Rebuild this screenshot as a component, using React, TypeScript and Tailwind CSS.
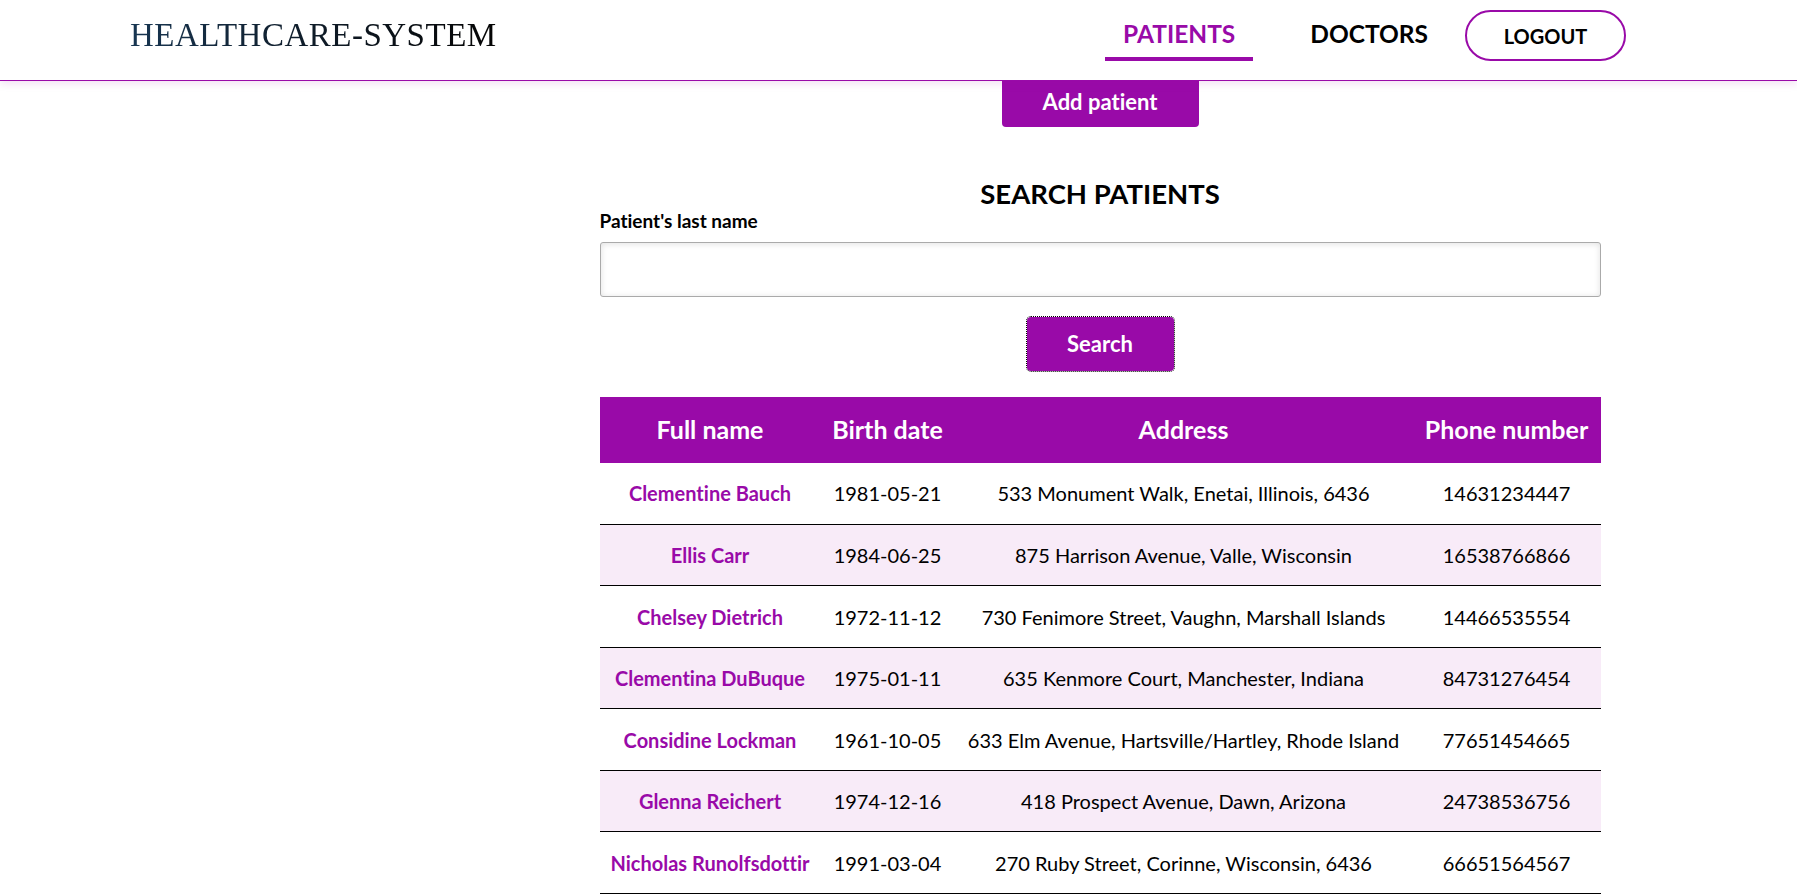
const patients = [
  { name: "Clementine Bauch", birth: "1981-05-21", address: "533 Monument Walk, Enetai, Illinois, 6436", phone: "14631234447" },
  { name: "Ellis Carr", birth: "1984-06-25", address: "875 Harrison Avenue, Valle, Wisconsin", phone: "16538766866" },
  { name: "Chelsey Dietrich", birth: "1972-11-12", address: "730 Fenimore Street, Vaughn, Marshall Islands", phone: "14466535554" },
  { name: "Clementina DuBuque", birth: "1975-01-11", address: "635 Kenmore Court, Manchester, Indiana", phone: "84731276454" },
  { name: "Considine Lockman", birth: "1961-10-05", address: "633 Elm Avenue, Hartsville/Hartley, Rhode Island", phone: "77651454665" },
  { name: "Glenna Reichert", birth: "1974-12-16", address: "418 Prospect Avenue, Dawn, Arizona", phone: "24738536756" },
  { name: "Nicholas Runolfsdottir", birth: "1991-03-04", address: "270 Ruby Street, Corinne, Wisconsin, 6436", phone: "66651564567" },
];

function Header() {
  return (
    <header className="relative z-10 h-[81px] pb-[9px] pl-[130px] pr-[171px] flex items-center justify-between bg-white border-b border-[#990aa8] shadow-[0_3px_8px_rgba(153,10,168,0.12)]">
      <span className="font-['Liberation_Serif',serif] text-[33px] leading-none tracking-[0.5px] bg-linear-to-r from-[#183652] to-[#050505] bg-clip-text text-transparent">
        HEALTHCARE-SYSTEM
      </span>
      <nav className="flex items-center">
        <a className="h-[51px] px-[18px] pt-[2px] flex items-center border-b-4 border-[#990aa8] text-[24.5px] font-bold text-[#990aa8]">
          PATIENTS
        </a>
        <a className="ml-[39px] h-[51px] px-[18px] pt-[2px] flex items-center border-b-4 border-transparent text-[24.5px] font-bold text-black">
          DOCTORS
        </a>
        <button className="ml-[19px] h-[51px] w-[161px] rounded-full border-2 border-[#990aa8] text-[20px] font-bold text-black">
          LOGOUT
        </button>
      </nav>
    </header>
  );
}

export default function App() {
  return (
    <div className="min-h-screen bg-white text-black font-[Lato,sans-serif] [font-variant-ligatures:none]">
      <Header />
      <div className="flex">
        <aside className="w-[403px] shrink-0" />
        <main className="flex-1">
          <div className="w-[1001px] mx-auto flex flex-col">
            <button className="self-center w-[197px] h-[46px] pb-[5px] rounded-b-[4px] bg-[#990aa8] text-white text-[22px] font-bold">
              Add patient
            </button>
            <h2 className="mt-[50px] text-center text-[27.5px] leading-[1.2] font-bold">SEARCH PATIENTS</h2>
            <label className="text-[19px] leading-[1.15] font-bold">Patient's last name</label>
            <input className="mt-[10px] h-[55px] w-full rounded-[3px] border border-[#aaaaaa] px-3 text-[20px] shadow-[inset_0_1px_6px_rgba(0,0,0,0.12)] outline-none" />
            <button className="self-center mt-[20px] w-[147px] h-[54px] rounded-[4px] bg-[#990aa8] text-white text-[22px] font-bold outline-1 outline-dotted outline-black">
              Search
            </button>
            <table className="mt-[26px] w-full table-fixed border-collapse">
              <colgroup>
                <col className="w-[221px]" />
                <col className="w-[134px]" />
                <col className="w-[458px]" />
                <col className="w-[188px]" />
              </colgroup>
              <thead>
                <tr className="h-[66px] bg-[#990aa8] text-white text-[25px]">
                  <th className="font-bold">Full name</th>
                  <th className="font-bold whitespace-nowrap">Birth date</th>
                  <th className="font-bold">Address</th>
                  <th className="font-bold whitespace-nowrap">Phone number</th>
                </tr>
              </thead>
              <tbody>
                {patients.map((p, i) => (
                  <tr key={p.name} className={`h-[61.5px] border-b border-black text-[20px] text-center ${i % 2 === 1 ? "bg-[#f8ebf8]" : "bg-white"}`}>
                    <td className="font-bold text-[#990aa8] whitespace-nowrap">{p.name}</td>
                    <td>{p.birth}</td>
                    <td className="whitespace-nowrap">{p.address}</td>
                    <td>{p.phone}</td>
                  </tr>
                ))}
              </tbody>
            </table>
          </div>
        </main>
      </div>
    </div>
  );
}
